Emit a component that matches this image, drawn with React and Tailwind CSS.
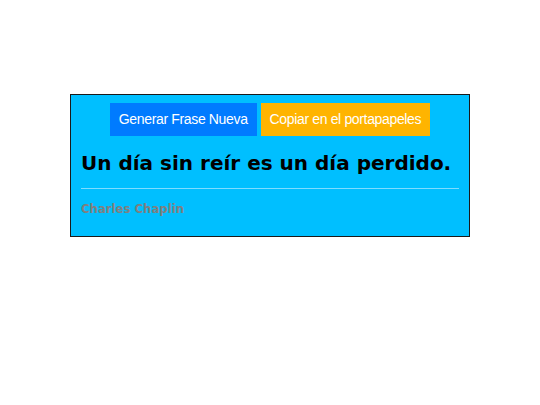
export default function App() {
  return (
    <div className="w-[540px] h-[405px] bg-white pt-[94px]">
      <div className="mx-auto w-[400px] border border-[#1a1a1a] bg-[#00bfff] px-[10px] pt-[8px] pb-[17px]">
        <div className="flex justify-center gap-[4px]">
          <button className="h-[33px] px-[9px] bg-[#007bff] text-white text-[14px] tracking-[-0.35px] font-['Liberation_Sans',sans-serif]">
            Generar Frase Nueva
          </button>
          <button className="h-[33px] px-[9px] bg-[#ffb400] text-white text-[14px] tracking-[-0.35px] font-['Liberation_Sans',sans-serif]">
            Copiar en el portapapeles
          </button>
        </div>
        <h1 className="mt-[13px] text-[20px] leading-[28px] font-bold text-black font-['DejaVu_Sans',sans-serif]">
          Un día sin reír es un día perdido.
        </h1>
        <hr className="mt-[11px] border-t border-[#7fdcff]" />
        <p className="mt-[12px] text-[11.7px] font-bold text-[#808080] font-['DejaVu_Sans',sans-serif]">
          Charles Chaplin
        </p>
      </div>
    </div>
  );
}
